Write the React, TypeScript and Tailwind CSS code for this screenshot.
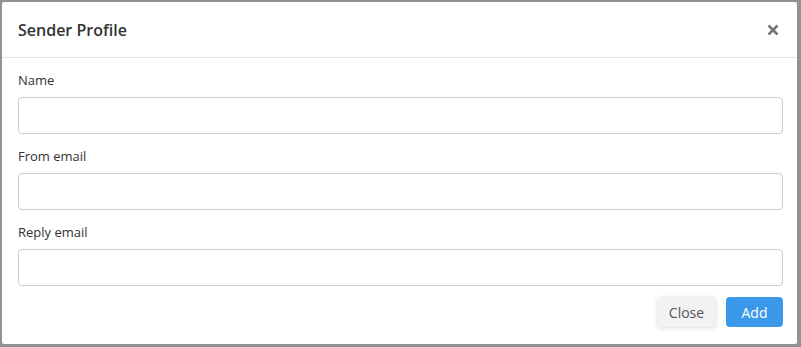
import React from "react";

function Field({ label }: { label: string }) {
  return (
    <div className="flex flex-col">
      <label className="text-[13px] leading-[18px] text-[#333]">{label}</label>
      <input
        type="text"
        className="mt-[8px] h-[37px] w-full rounded-[4px] border border-[#ccc] bg-white px-3 outline-none"
      />
    </div>
  );
}

export default function App() {
  return (
    <div
      className="h-[347px] w-[801px] bg-[#929292] pl-[2px] pt-[2px]"
      style={{ fontFamily: '"Open Sans", "Noto Sans", sans-serif' }}
    >
      <div className="flex h-[342px] w-[795px] flex-col rounded-[2px] bg-white">
        <div className="flex h-[56px] items-center justify-between border-b border-[#e5e5e5] pl-[16px] pr-[14px]">
          <h4 className="text-[16px] font-semibold leading-[22px] text-[#333]">Sender Profile</h4>
          <button className="flex h-[20px] w-[20px] items-center justify-center">
            <svg width="12" height="12" viewBox="0 0 12 12">
              <path d="M1.5 1.5 L10.5 10.5 M10.5 1.5 L1.5 10.5" stroke="#777" strokeWidth="2.6" strokeLinecap="butt" />
            </svg>
          </button>
        </div>
        <div className="flex flex-col gap-[13px] pl-[16px] pr-[14px] pt-[13px]">
          <Field label="Name" />
          <Field label="From email" />
          <Field label="Reply email" />
        </div>
        <div className="flex justify-end gap-[10px] pr-[14px] pt-[11px]">
          <button className="h-[30px] w-[59px] rounded-[4px] bg-[#f2f2f2] text-[14px] text-[#555] shadow-[0_1px_4px_rgba(0,0,0,0.15)]">
            Close
          </button>
          <button className="h-[30px] w-[57px] rounded-[4px] bg-[#3b97e8] text-[14px] text-white">
            Add
          </button>
        </div>
      </div>
    </div>
  );
}
